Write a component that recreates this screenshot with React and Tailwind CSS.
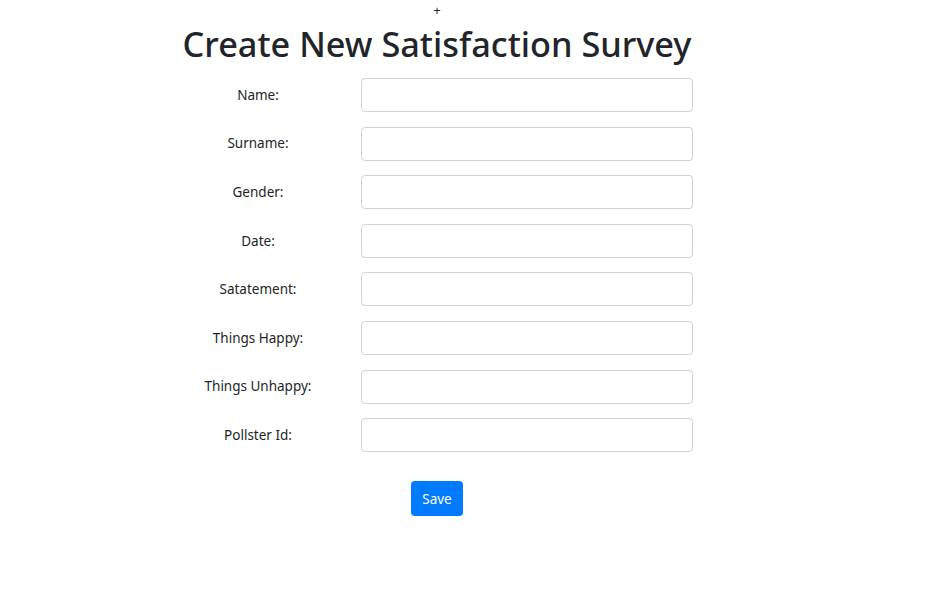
import React from "react";

const fields = [
  "Name:",
  "Surname:",
  "Gender:",
  "Date:",
  "Satatement:",
  "Things Happy:",
  "Things Unhappy:",
  "Pollster Id:",
];

export default function App() {
  return (
    <div
      className="w-[947px] h-[616px] bg-white text-[#212529]"
      style={{ fontFamily: '"Noto Sans", "Open Sans", sans-serif' }}
    >
      <div className="w-[874px] flex flex-col items-center">
        <div className="h-[20px] pt-[2px] text-[13px] leading-[16px]">+</div>
        <h1 className="text-[34.3px] leading-[46px] font-medium mt-[1px]">
          Create New Satisfaction Survey
        </h1>
        <div className="w-[512px] flex flex-col gap-[14.6px] mt-[11px]">
          {fields.map((f) => (
            <div key={f} className="flex items-center">
              <label className="w-[154px] shrink-0 text-center text-[13.5px]">{f}</label>
              <div className="ml-[26px] w-[332px] shrink-0 h-[34px] border border-[#ced4da] rounded-[4px] bg-white" />
            </div>
          ))}
        </div>
        <button className="mt-[29px] h-[35px] px-[11px] bg-[#007bff] text-white text-[13.5px] rounded-[4px]">
          Save
        </button>
      </div>
    </div>
  );
}
